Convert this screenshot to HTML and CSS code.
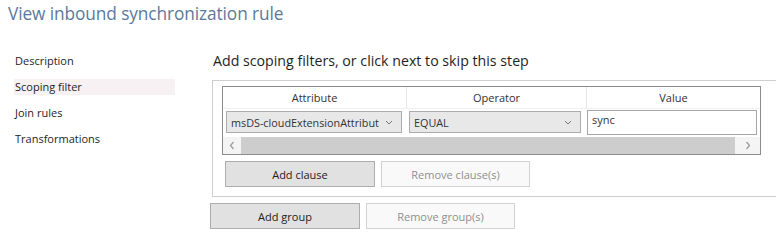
FILE: index.html
```html
<!DOCTYPE html>
<html>
<head>
<meta charset="utf-8">
<link rel="stylesheet" href="styles.css">
</head>
<body>
<div class="title">View inbound synchronization rule</div>
<div class="layout">
  <nav class="nav">
    <div class="nav-item">Description</div>
    <div class="nav-item active">Scoping filter</div>
    <div class="nav-item">Join rules</div>
    <div class="nav-item">Transformations</div>
  </nav>
  <main class="main">
    <div class="heading">Add scoping filters, or click next to skip this step</div>
    <div class="group">
      <div class="grid">
        <div class="grid-head">
          <div class="col c1">Attribute</div>
          <div class="col c2">Operator</div>
          <div class="col c3">Value</div>
        </div>
        <div class="grid-row">
          <div class="cell c1"><div class="combo"><span>msDS-cloudExtensionAttribut</span><svg class="chev" width="8" height="5" viewBox="0 0 8 5"><path d="M1 1 L4 4 L7 1" fill="none" stroke="#777" stroke-width="1"/></svg></div></div>
          <div class="cell c2"><div class="combo"><span>EQUAL</span><svg class="chev" width="8" height="5" viewBox="0 0 8 5"><path d="M1 1 L4 4 L7 1" fill="none" stroke="#777" stroke-width="1"/></svg></div></div>
          <div class="cell c3"><div class="textbox">sync</div></div>
        </div>
        <div class="hscroll">
          <div class="arrow left"><svg width="6" height="9" viewBox="0 0 6 9"><path d="M4.5 1 L1.5 4.5 L4.5 8" fill="none" stroke="#999" stroke-width="1.2"/></svg></div>
          <div class="track"></div>
          <div class="arrow right"><svg width="6" height="9" viewBox="0 0 6 9"><path d="M1.5 1 L4.5 4.5 L1.5 8" fill="none" stroke="#999" stroke-width="1.2"/></svg></div>
        </div>
      </div>
      <div class="btn-row inner">
        <button class="btn">Add clause</button>
        <button class="btn disabled">Remove clause(s)</button>
      </div>
    </div>
    <div class="btn-row outer">
      <button class="btn">Add group</button>
      <button class="btn disabled">Remove group(s)</button>
    </div>
  </main>
</div>
</body>
</html>
```

FILE: styles.css
```css
html, body {
  margin: 0;
  padding: 0;
  background: #fff;
  font-family: "Open Sans", "Noto Sans", sans-serif;
  color: #1e1e1e;
  overflow: hidden;
}
.title {
  font-size: 17.3px;
  color: #5b7a99;
  padding: 2px 0 0 8px;
  height: 31px;
  line-height: 24px;
  letter-spacing: -0.1px;
}
.layout {
  display: flex;
}
.nav {
  flex: none;
  width: 175px;
  padding-top: 20px;
  font-size: 11px;
}
.nav-item {
  height: 16px;
  line-height: 16px;
  padding-left: 1px;
  margin-left: 14px;
  margin-bottom: 10px;
}
.nav-item.active {
  background: #f7f1f4;
}
.main {
  flex: none;
  margin-left: 37px;
  width: 564px;
}
.heading {
  font-size: 14.2px;
  height: 20px;
  line-height: 20px;
  margin-top: 18px;
  margin-left: 1px;
  color: #1e1e1e;
}
.group {
  margin-top: 9px;
  border: 1px solid #cfcfcf;
  border-right: none;
  padding: 5px 0 9px 9px;
}
.grid {
  width: 537px;
  border: 1px solid #8c8c8c;
  font-size: 11px;
}
.grid-head {
  display: flex;
  height: 21px;
  line-height: 22px;
  border-bottom: 1px solid #f0f0f0;
}
.grid-head .col {
  text-align: center;
  color: #333;
}
.grid-head .c1, .grid-head .c2 {
  border-right: 1px solid #e6e6e6;
}
.c1 { width: 183px; }
.c2 { width: 179px; }
.c3 { flex: 1; }
.grid-row {
  display: flex;
  height: 27px;
  padding-top: 1px;
}
.cell {
  padding: 1px 4px 0 3px;
  box-sizing: border-box;
}
.cell.c3 { padding: 0 3px 0 2px; }
.combo {
  height: 22px;
  box-sizing: border-box;
  border: 1px solid #acacac;
  background: #e8e8e8;
  display: flex;
  align-items: center;
  justify-content: space-between;
  padding: 0 8px 0 4px;
  color: #333;
  font-size: 10.8px;
}
.textbox {
  height: 25px;
  box-sizing: border-box;
  border: 1px solid #a5a5a5;
  background: #fff;
  padding: 1px 4px;
  line-height: 16px;
  color: #333;
}
.hscroll {
  display: flex;
  height: 17px;
  margin-top: 0;
}
.arrow {
  width: 18px;
  display: flex;
  align-items: center;
  justify-content: center;
  background: #f4f4f4;
}
.arrow.right {
  width: 25px;
}
.track {
  flex: 1;
  background: #cdcdcd;
}
.btn-row {
  display: flex;
  gap: 6px;
}
.btn-row.inner {
  margin-top: 6px;
  margin-left: 3px;
}
.btn-row.outer {
  margin-top: 6px;
  margin-left: -2px;
}
.btn {
  width: 150px;
  height: 26px;
  font-family: inherit;
  font-size: 11px;
  border: 1px solid #adadad;
  background: #e1e1e1;
  color: #222;
  padding: 0;
  margin: 0;
}
.btn.disabled {
  border-color: #d2d2d2;
  background: #f9f9f9;
  color: #8f8f8f;
  width: 149px;
}
```
